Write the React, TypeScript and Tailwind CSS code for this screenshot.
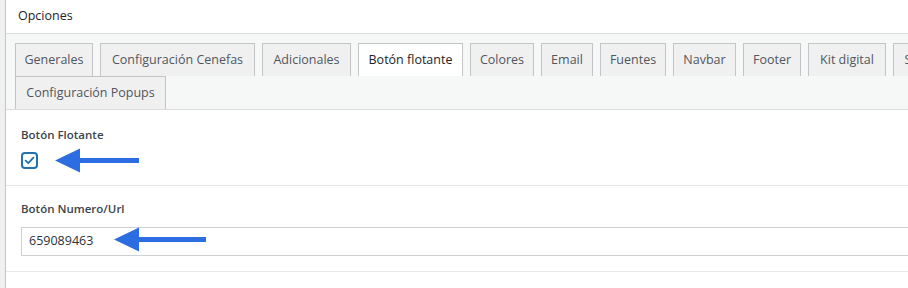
import React from "react";

// widths measured from the screenshot so the row wraps the same way
const tabs: { label: string; w: string }[] = [
  { label: "Generales", w: "w-[78px]" },
  { label: "Configuración Cenefas", w: "w-[155px]" },
  { label: "Adicionales", w: "w-[89px]" },
  { label: "Botón flotante", w: "w-[105px]" },
  { label: "Colores", w: "w-[64px]" },
  { label: "Email", w: "w-[52px]" },
  { label: "Fuentes", w: "w-[66px]" },
  { label: "Navbar", w: "w-[63px]" },
  { label: "Footer", w: "w-[58px]" },
  { label: "Kit digital", w: "w-[78px]" },
  { label: "Scripts", w: "w-[62px]" },
  { label: "Configuración Popups", w: "w-[151px]" },
];

function Arrow({ w }: { w: number }) {
  return (
    <svg width={w} height={25} viewBox={`0 0 ${w} 25`} className="shrink-0">
      <path
        d={`M0 12.5 L25 0.5 L25 10 L${w - 1} 10 L${w - 1} 15 L25 15 L25 24.5 Z`}
        fill="#2c6de2"
      />
    </svg>
  );
}

export default function App() {
  const active = "Botón flotante";
  return (
    <div className="w-[908px] h-[288px] overflow-hidden bg-[#f0f0f1] pl-[5px] font-['Open_Sans',sans-serif]">
      <div className="w-[1000px] h-full bg-white border-l border-[#c3c4c7]">
        <div className="h-[34px] border-b border-[#dcdcde] px-[12px] flex items-center text-[12.5px] text-[#1d2327]">
          Opciones
        </div>

        <div className="bg-[#f6f7f7] border-b border-[#dcdcde] pt-[9px] pl-[9px] flex flex-wrap gap-x-[7px]">
          {tabs.map((t) => (
            <div
              key={t.label}
              className={`${t.w} h-[33px] flex items-center justify-center border border-b-0 border-[#c3c4c7] text-[12.5px] whitespace-nowrap ${
                t.label === active ? "bg-white text-[#1d2327]" : "bg-[#f0f0f1] text-[#50575e]"
              }`}
            >
              {t.label}
            </div>
          ))}
        </div>

        <div className="px-[15px] pt-[17px] pb-[12px] border-b border-[#e6e6e8]">
          <div className="text-[11.5px] leading-4 font-semibold text-[#3c434a] mb-[5px]">
            Botón Flotante
          </div>
          <div className="h-[25px] flex items-center gap-[17px]">
            <div className="w-[17px] h-[17px] rounded-[4px] border-2 border-[#2271b1] flex items-center justify-center">
              <svg width="11" height="11" viewBox="0 0 11 11">
                <path d="M1.6 5.6 L4.3 8.2 L9.4 2.6" fill="none" stroke="#2271b1" strokeWidth="1.8" strokeLinecap="round" strokeLinejoin="round" />
              </svg>
            </div>
            <Arrow w={85} />
          </div>
        </div>

        <div className="px-[15px] pt-[15px] pb-[15px] border-b border-[#e6e6e8]">
          <div className="text-[11.5px] leading-4 font-semibold text-[#3c434a] mb-[10px]">
            Botón Numero/Url
          </div>
          <div className="relative h-[29px] border border-[#cfd0d3] flex items-center pl-[7px] text-[12.5px] text-[#2c3338]">
            659089463
            <div className="absolute left-[92px] top-[-1px]">
              <Arrow w={93} />
            </div>
          </div>
        </div>
      </div>
    </div>
  );
}
